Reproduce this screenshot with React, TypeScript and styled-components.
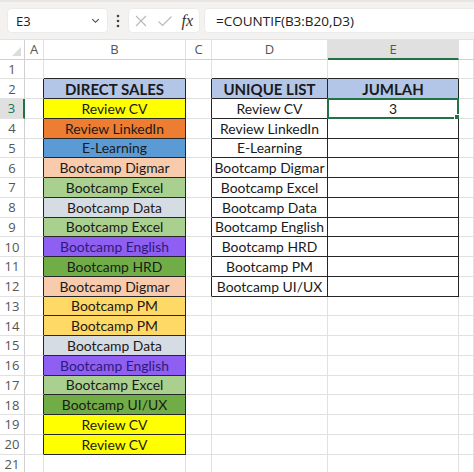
import React from 'react';
import styled, { createGlobalStyle, css } from 'styled-components';

const GlobalStyle = createGlobalStyle`
	body {
		margin: 0;
		background: #ffffff;
		font-family: 'Open Sans', 'Noto Sans', sans-serif;
	}
`;

const GRID = '#e1e1e1';
const DARK = '#262626';
const GREEN = '#217346';

const Page = styled.div`
	width: 474px;
	height: 472px;
	overflow: hidden;
	background: #ffffff;
`;

const FormulaBar = styled.div`
	display: flex;
	align-items: center;
	height: 40px;
	padding: 0 0 0 8px;
	box-sizing: border-box;
	background: #f3f2f1;
	border-top: 2px solid #e8e6e4;
	border-bottom: 1px solid #e4e2e0;
`;

const Box = styled.div<{ $width?: number; $grow?: boolean }>`
	display: flex;
	align-items: center;
	height: 23px;
	box-sizing: border-box;
	background: #ffffff;
	border-radius: 4px;
	box-shadow: 0 0 0 1px #ebebeb;
	${(p) => (p.$grow ? 'flex: 1; border-radius: 4px 0 0 4px;' : `width: ${p.$width}px;`)}
`;

const NameBox = styled(Box)`
	justify-content: space-between;
	padding: 0 6px 0 8px;
	font-size: 13px;
	color: #202020;
`;

const Dots = styled.div`
	width: 22px;
	display: flex;
	justify-content: center;
`;

const IconBox = styled(Box)`
	justify-content: space-between;
	padding: 0 6px 0 5px;
`;

const Fx = styled.span`
	font-family: 'Liberation Serif', serif;
	font-style: italic;
	font-size: 16px;
	color: #333333;
`;

const FormulaInput = styled(Box)`
	margin-left: 6px;
	padding-left: 11px;
	font-size: 13.5px;
	color: #202020;
`;

const Sheet = styled.div`
	display: grid;
	grid-template-columns: 25px 19px 142px 26px 116px 131px 1fr;
	grid-template-rows: 19.5px repeat(21, 19.75px);
`;

type CellProps = {
	$bg?: string;
	$right?: boolean;
	$bottom?: boolean;
	$bold?: boolean;
	$color?: string;
};

const Cell = styled.div<CellProps>`
	box-sizing: border-box;
	display: flex;
	align-items: center;
	justify-content: center;
	white-space: nowrap;
	font-family: 'Lato', 'Open Sans', sans-serif;
	font-size: ${(p) => (p.$bold ? '15px' : '13.9px')};
	color: ${(p) => p.$color || '#1a1a1a'};
	font-weight: ${(p) => (p.$bold ? 700 : 400)};
	background: ${(p) => p.$bg || '#ffffff'};
	border-right: 1px solid ${(p) => (p.$right ? DARK : GRID)};
	border-bottom: 1px solid ${(p) => (p.$bottom ? DARK : GRID)};
	position: relative;
`;

const headerText = css`
	font-family: 'Open Sans', 'Noto Sans', sans-serif;
	font-size: 13px;
	color: #555555;
`;

const ColHead = styled.div<{ $active?: boolean }>`
	${headerText};
	box-sizing: border-box;
	display: flex;
	align-items: center;
	justify-content: center;
	background: ${(p) => (p.$active ? '#e0e0e0' : '#ffffff')};
	border-right: 1px solid ${GRID};
	border-bottom: ${(p) => (p.$active ? `2px solid ${GREEN}` : `1px solid #d0d0d0`)};
	color: ${(p) => (p.$active ? GREEN : '#555555')};
`;

const RowHead = styled.div<{ $active?: boolean }>`
	${headerText};
	box-sizing: border-box;
	display: flex;
	align-items: center;
	justify-content: center;
	background: ${(p) => (p.$active ? '#e0e0e0' : '#ffffff')};
	border-right: ${(p) => (p.$active ? `2px solid ${GREEN}` : `1px solid #d0d0d0`)};
	border-bottom: 1px solid ${GRID};
	color: ${(p) => (p.$active ? GREEN : '#555555')};
`;

const Corner = styled.div`
	box-sizing: border-box;
	border-right: 1px solid #d0d0d0;
	border-bottom: 1px solid #d0d0d0;
	display: flex;
	align-items: flex-end;
	justify-content: flex-end;
	padding: 0 3px 3px 0;
`;

const Selection = styled.div`
	position: absolute;
	left: -1px;
	top: -1px;
	right: -1px;
	bottom: -1px;
	border: 2px solid ${GREEN};
	pointer-events: none;
`;

const Handle = styled.div`
	position: absolute;
	right: -4px;
	bottom: -4px;
	width: 5px;
	height: 5px;
	background: ${GREEN};
	border: 1px solid #ffffff;
`;

const sales: [string, string, string?][] = [
	['Review CV', '#ffff00'],
	['Review LinkedIn', '#ed7d31'],
	['E-Learning', '#5b9bd5'],
	['Bootcamp Digmar', '#f8cbad'],
	['Bootcamp Excel', '#a9d08e'],
	['Bootcamp Data', '#d6dce4'],
	['Bootcamp Excel', '#a9d08e'],
	['Bootcamp English', '#8f5ef3', '#2e1a78'],
	['Bootcamp HRD', '#70ad47'],
	['Bootcamp Digmar', '#f8cbad'],
	['Bootcamp PM', '#ffd966'],
	['Bootcamp PM', '#ffd966'],
	['Bootcamp Data', '#d6dce4'],
	['Bootcamp English', '#8f5ef3', '#2e1a78'],
	['Bootcamp Excel', '#a9d08e'],
	['Bootcamp UI/UX', '#70ad47'],
	['Review CV', '#ffff00'],
	['Review CV', '#ffff00']
];

const unique = [
	'Review CV',
	'Review LinkedIn',
	'E-Learning',
	'Bootcamp Digmar',
	'Bootcamp Excel',
	'Bootcamp Data',
	'Bootcamp English',
	'Bootcamp HRD',
	'Bootcamp PM',
	'Bootcamp UI/UX'
];

const HEADER_BLUE = '#b4c6e7';
const columns = ['A', 'B', 'C', 'D', 'E', ''];

function renderCell(col: number, row: number) {
	// col: 0=A .. 5=F
	const inB = row >= 2 && row <= 20;
	const inDE = row >= 2 && row <= 12;
	const props: CellProps = {};
	let text: React.ReactNode = '';

	if (col === 0 && inB) props.$right = true;
	if (col === 1) {
		if (inB) props.$right = true;
		if (row >= 1 && row <= 20) props.$bottom = true;
		if (row === 2) {
			text = 'DIRECT SALES';
			props.$bg = HEADER_BLUE;
			props.$bold = true;
		} else if (inB) {
			const [label, bg, color] = sales[row - 3];
			text = label;
			props.$bg = bg;
			props.$color = color;
		}
	}
	if (col === 2 && inDE) props.$right = true;
	if (col === 3 || col === 4) {
		if (inDE) props.$right = true;
		if (row >= 1 && row <= 12) props.$bottom = true;
		if (row === 2) {
			text = col === 3 ? 'UNIQUE LIST' : 'JUMLAH';
			props.$bg = HEADER_BLUE;
			props.$bold = true;
		} else if (col === 3 && inDE) {
			text = unique[row - 3];
		} else if (col === 4 && row === 3) {
			text = '3';
		}
	}

	const selected = col === 4 && row === 3;
	return (
		<Cell key={`${col}-${row}`} {...props}>
			{text}
			{selected && (
				<Selection>
					<Handle />
				</Selection>
			)}
		</Cell>
	);
}

export default function App() {
	const rows = Array.from({ length: 21 }, (_, i) => i + 1);

	return (
		<Page>
			<GlobalStyle />
			<FormulaBar>
				<NameBox $width={99}>
					<span>E3</span>
					<svg width="11" height="11" viewBox="0 0 12 12">
						<path d="M2.5 4.5 L6 8 L9.5 4.5" fill="none" stroke="#444" strokeWidth="1.2" />
					</svg>
				</NameBox>
				<Dots>
					<svg width="4" height="14" viewBox="0 0 4 14">
						<circle cx="2" cy="2" r="1.3" fill="#444" />
						<circle cx="2" cy="7" r="1.3" fill="#444" />
						<circle cx="2" cy="12" r="1.3" fill="#444" />
					</svg>
				</Dots>
				<IconBox $width={70}>
					<svg width="14" height="14" viewBox="0 0 14 14">
						<path d="M2 2 L12 12 M12 2 L2 12" stroke="#b8b8b8" strokeWidth="1.1" />
					</svg>
					<svg width="16" height="14" viewBox="0 0 16 14">
						<path d="M1.5 7.5 L5.5 11.5 L14.5 2.5" fill="none" stroke="#b8b8b8" strokeWidth="1.1" />
					</svg>
					<Fx>fx</Fx>
				</IconBox>
				<FormulaInput $grow>=COUNTIF(B3:B20,D3)</FormulaInput>
			</FormulaBar>
			<Sheet>
				<Corner>
					<svg width="9" height="9" viewBox="0 0 9 9">
						<path d="M9 0 L9 9 L0 9 Z" fill="#dcdcdc" />
					</svg>
				</Corner>
				{columns.map((c, i) => (
					<ColHead key={c || 'F'} $active={i === 4}>
						{c}
					</ColHead>
				))}
				{rows.map((r) => (
					<React.Fragment key={r}>
						<RowHead $active={r === 3}>{r}</RowHead>
						{columns.map((_, ci) => renderCell(ci, r))}
					</React.Fragment>
				))}
			</Sheet>
		</Page>
	);
}
